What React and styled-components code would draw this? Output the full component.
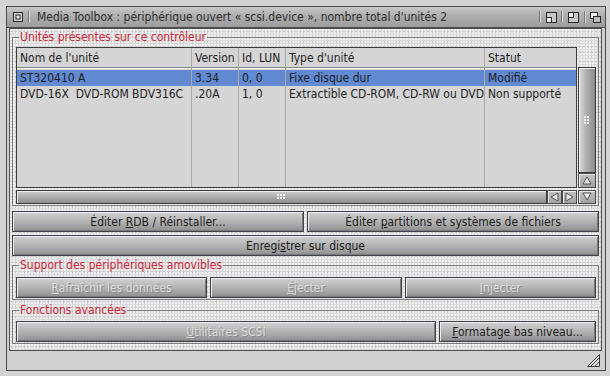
import React from 'react';
import styled, { createGlobalStyle } from 'styled-components';

const GlobalStyle = createGlobalStyle`
  html, body {
    margin: 0;
    padding: 0;
    background: #d3d3d3;
  }
  body {
    font-family: "DejaVu Sans Condensed", "DejaVu Sans", "Liberation Sans", sans-serif;
    font-stretch: condensed;
    font-size: 12px;
    color: #1e1e1e;
  }
`;

const Page = styled.div`
  width: 610px;
  height: 376px;
  box-sizing: border-box;
  padding: 6px 0 0 6px;
  background: #d3d3d3;
  overflow: hidden;
`;

const Window = styled.div`
  width: 600px;
  height: 365px;
  box-sizing: border-box;
  border: 1px solid #4a4a4a;
  background: #d0d0d0;
  display: flex;
  flex-direction: column;
`;

const TitleBar = styled.div`
  height: 21px;
  flex: none;
  box-sizing: border-box;
  border-bottom: 1px solid #4a4a4a;
  background: linear-gradient(to bottom, #c8c8c8 0%, #b0b0b0 40%, #9c9c9c 100%);
  display: flex;
  align-items: center;
`;

const Gadget = styled.div`
  width: ${p => p.$w}px;
  height: 100%;
  flex: none;
  display: flex;
  align-items: center;
  justify-content: center;
`;

const Separator = styled.div`
  width: 0;
  height: 12px;
  flex: none;
  border-left: 1px solid #767676;
  border-right: 1px solid #dcdcdc;
`;

const Title = styled.div`
  flex: 1;
  padding-left: 7px;
  color: #2e2e2e;
  font-size: 12px;
  line-height: 20px;
  white-space: nowrap;
  overflow: hidden;
`;

const Body = styled.div`
  flex: 1;
  display: flex;
  flex-direction: column;
  padding: 0 3px 0 2px;
`;

const Panel = styled.div`
  flex: 1;
  box-sizing: border-box;
  border: 1px solid #505050;
  padding: 2px;
  display: flex;
  flex-direction: column;
  background-color: #dadada;
  background-image:
    radial-gradient(circle at 1px 1px, rgba(255, 255, 255, 0.8) 0.6px, transparent 1px),
    radial-gradient(circle at 1px 1px, rgba(150, 150, 150, 0.35) 0.6px, transparent 1px);
  background-size: 3px 3px, 4px 5px;
  background-position: 0 0, 1px 2px;
`;

const Group = styled.fieldset`
  margin: ${p => p.$top || 0}px 0 0 0;
  padding: ${p => p.$pad || 3}px 2px 1px 3px;
  border: 1px solid #7c7c7c;
  min-width: 0;
`;

const Legend = styled.legend`
  margin: 0 0 0 3px;
  padding: 0 1px;
  color: #cc2639;
  font-size: 12px;
  line-height: 13px;
`;

const ListGrid = styled.div`
  display: grid;
  grid-template-columns: 1fr 18px;
  grid-template-rows: 141px 14px;
  column-gap: 1px;
  row-gap: 2px;
`;

const Table = styled.div`
  box-sizing: border-box;
  border: 1px solid #3c3c3c;
  background: #d5d5d5;
  display: flex;
`;

const Column = styled.div`
  width: ${p => (p.$w ? `${p.$w}px` : 'auto')};
  flex: ${p => (p.$w ? 'none' : '1')};
  box-sizing: border-box;
  border-right: ${p => (p.$last ? 'none' : '1px solid #a9a9a9')};
  display: flex;
  flex-direction: column;
  min-width: 0;
`;

const HeaderCell = styled.div`
  height: 20px;
  box-sizing: border-box;
  padding-left: 3px;
  line-height: 20px;
  border-bottom: 1px solid #8a8a8a;
  box-shadow: 0 1px 0 #f0f0f0;
  margin-bottom: 2px;
  white-space: nowrap;
  overflow: hidden;
`;

const Cell = styled.div`
  height: 16px;
  padding-left: 3px;
  line-height: 16px;
  white-space: nowrap;
  overflow: hidden;
  background: ${p => (p.$selected ? '#618ad3' : 'transparent')};
`;

const VColumn = styled.div`
  display: flex;
  flex-direction: column;
  padding-top: 20px;
`;

const VScroll = styled.div`
  flex: 1;
  box-sizing: border-box;
  border: 1px solid #3a3a3a;
  background: linear-gradient(to right, #dadada 0%, #b4b4b4 40%, #8c8c8c 100%);
  box-shadow: inset 1px 1px 0 #efefef;
  display: flex;
  align-items: center;
  justify-content: center;
`;

const HRow = styled.div`
  display: flex;
`;

const HScroll = styled.div`
  flex: 1;
  box-sizing: border-box;
  border: 1px solid #3a3a3a;
  background: linear-gradient(to bottom, #d0d0d0 0%, #b0b0b0 45%, #8e8e8e 100%);
  box-shadow: inset 1px 1px 0 #eeeeee;
  display: flex;
  align-items: center;
  justify-content: center;
`;

const Grip = styled.div`
  width: ${p => p.$w}px;
  height: ${p => p.$h}px;
  background-image: radial-gradient(circle at 1px 1px, #f4f4f4 0.8px, transparent 1px);
  background-size: 3px 3px;
  opacity: 0.9;
`;

const ArrowBox = styled.div`
  width: ${p => p.$w || 15}px;
  height: ${p => p.$h || 14}px;
  flex: none;
  box-sizing: border-box;
  border: 1px solid #4a4a4a;
  background: linear-gradient(to bottom, #c4c4c4, #a2a2a2);
  box-shadow: inset 1px 1px 0 #ebebeb;
  display: flex;
  align-items: center;
  justify-content: center;
`;

const Row = styled.div`
  display: grid;
  grid-template-columns: ${p => p.$cols};
  gap: 3px;
  margin-top: ${p => p.$top || 0}px;
`;

const Button = styled.div`
  height: 21px;
  box-sizing: border-box;
  border: 1px solid #40404a;
  background: linear-gradient(to bottom, #d2d2d2 0%, #bcbcbc 35%, #a6a6a6 70%, #8e8e8e 100%);
  box-shadow: inset 1px 1px 0 #eeeeee, inset -1px -1px 0 #7a7a7a;
  display: flex;
  align-items: center;
  justify-content: center;
  font-size: 12px;
  white-space: nowrap;
  color: ${p => (p.$disabled ? '#dcdcdc' : '#1c1c1c')};
  text-shadow: ${p => (p.$disabled ? '1px 1px 0 #8c8c8c' : 'none')};

  u {
    text-underline-offset: 1px;
  }
`;

const BottomBar = styled.div`
  height: 19px;
  flex: none;
  display: flex;
  align-items: center;
  justify-content: flex-end;
  padding-right: 2px;
`;

const CloseIcon = () => (
  <svg width="10" height="10" viewBox="0 0 10 10">
    <rect x="0.5" y="0.5" width="9" height="9" fill="#cfcfcf" stroke="#2a2a2a" />
    <rect x="3" y="3" width="4" height="4" fill="#f2f2f2" stroke="#2a2a2a" strokeWidth="1" />
  </svg>
);

const IconifyIcon = () => (
  <svg width="11" height="11" viewBox="0 0 11 11">
    <rect x="0.5" y="0.5" width="10" height="10" fill="#c8c8c8" stroke="#2a2a2a" />
    <rect x="0.5" y="5.5" width="5" height="5" fill="#eeeeee" stroke="#2a2a2a" />
  </svg>
);

const ZoomIcon = () => (
  <svg width="11" height="11" viewBox="0 0 11 11">
    <rect x="0.5" y="0.5" width="10" height="10" fill="#c8c8c8" stroke="#2a2a2a" />
    <rect x="0.5" y="0.5" width="5" height="5" fill="#eeeeee" stroke="#2a2a2a" />
  </svg>
);

const DepthIcon = () => (
  <svg width="11" height="11" viewBox="0 0 11 11">
    <rect x="0.5" y="0.5" width="7" height="6" fill="#eeeeee" stroke="#2a2a2a" />
    <rect x="3.5" y="4.5" width="7" height="6" fill="#bdbdbd" stroke="#2a2a2a" />
  </svg>
);

const Triangle = ({ dir }) => {
  const pts = {
    up: '5,1 9,8 1,8',
    down: '1,1 9,1 5,8',
    left: '8,1 8,9 1,5',
    right: '1,1 1,9 8,5',
  }[dir];
  return (
    <svg width="10" height="10" viewBox="0 0 10 10">
      <polygon points={pts} fill="#ececec" stroke="#555555" strokeWidth="1" />
    </svg>
  );
};

const ResizeIcon = () => (
  <svg width="13" height="13" viewBox="0 0 13 13">
    <polygon points="12.5,0.5 12.5,12.5 0.5,12.5" fill="#e4e4e4" stroke="#3a3a3a" />
    <line x1="12" y1="4" x2="4" y2="12" stroke="#3a3a3a" />
    <line x1="12" y1="8" x2="8" y2="12" stroke="#3a3a3a" />
  </svg>
);

const columns = [
  { title: "Nom de l'unité", width: 175 },
  { title: 'Version', width: 47 },
  { title: 'Id, LUN', width: 47 },
  { title: "Type d'unité", width: 199 },
  { title: 'Statut' },
];

const units = [
  ['ST320410 A', '3.34', '0, 0', 'Fixe disque dur', 'Modifié'],
  ['DVD-16X\u00a0 DVD-ROM BDV316C', '.20A', '1, 0', 'Extractible CD-ROM, CD-RW ou DVD', 'Non supporté'],
];

export default function App() {
  return (
    <>
      <GlobalStyle />
      <Page>
        <Window>
          <TitleBar>
            <Gadget $w={21}><CloseIcon /></Gadget>
            <Separator />
            <Title>Media Toolbox : périphérique ouvert « scsi.device », nombre total d'unités 2</Title>
            <Separator />
            <Gadget $w={20}><IconifyIcon /></Gadget>
            <Separator />
            <Gadget $w={21}><ZoomIcon /></Gadget>
            <Separator />
            <Gadget $w={19}><DepthIcon /></Gadget>
          </TitleBar>
          <Body>
            <Panel>
              <Group>
                <Legend>Unités présentes sur ce contrôleur</Legend>
                <ListGrid>
                  <Table>
                    {columns.map((col, ci) => (
                      <Column key={col.title} $w={col.width} $last={ci === columns.length - 1}>
                        <HeaderCell>{col.title}</HeaderCell>
                        {units.map((u, ri) => (
                          <Cell key={ri} $selected={ri === 0}>{u[ci]}</Cell>
                        ))}
                      </Column>
                    ))}
                  </Table>
                  <VColumn>
                    <VScroll><Grip $w={6} $h={9} /></VScroll>
                    <ArrowBox $w={18} $h={15}><Triangle dir="up" /></ArrowBox>
                  </VColumn>
                  <HRow>
                    <HScroll><Grip $w={9} $h={6} /></HScroll>
                    <ArrowBox><Triangle dir="left" /></ArrowBox>
                    <ArrowBox><Triangle dir="right" /></ArrowBox>
                  </HRow>
                  <ArrowBox $w={18}><Triangle dir="down" /></ArrowBox>
                </ListGrid>
              </Group>

              <Row $cols="1fr 1fr" $top={5}>
                <Button><span>Éditer <u>R</u>DB / Réinstaller...</span></Button>
                <Button><span>Éditer <u>p</u>artitions et systèmes de fichiers</span></Button>
              </Row>
              <Row $cols="1fr" $top={3}>
                <Button><span>Enregi<u>s</u>trer sur disque</span></Button>
              </Row>

              <Group $top={3} $pad={5}>
                <Legend>Support des périphériques amovibles</Legend>
                <Row $cols="1fr 1fr 1fr">
                  <Button $disabled><span><u>R</u>afraîchir les données</span></Button>
                  <Button $disabled><span><u>É</u>jecter</span></Button>
                  <Button $disabled><span><u>I</u>njecter</span></Button>
                </Row>
              </Group>

              <Group $top={4} $pad={4}>
                <Legend>Fonctions avancées</Legend>
                <Row $cols="1fr 157px">
                  <Button $disabled><span><u>U</u>tilitaires SCSI</span></Button>
                  <Button><span><u>F</u>ormatage bas niveau...</span></Button>
                </Row>
              </Group>
            </Panel>
            <BottomBar>
              <ResizeIcon />
            </BottomBar>
          </Body>
        </Window>
      </Page>
    </>
  );
}
